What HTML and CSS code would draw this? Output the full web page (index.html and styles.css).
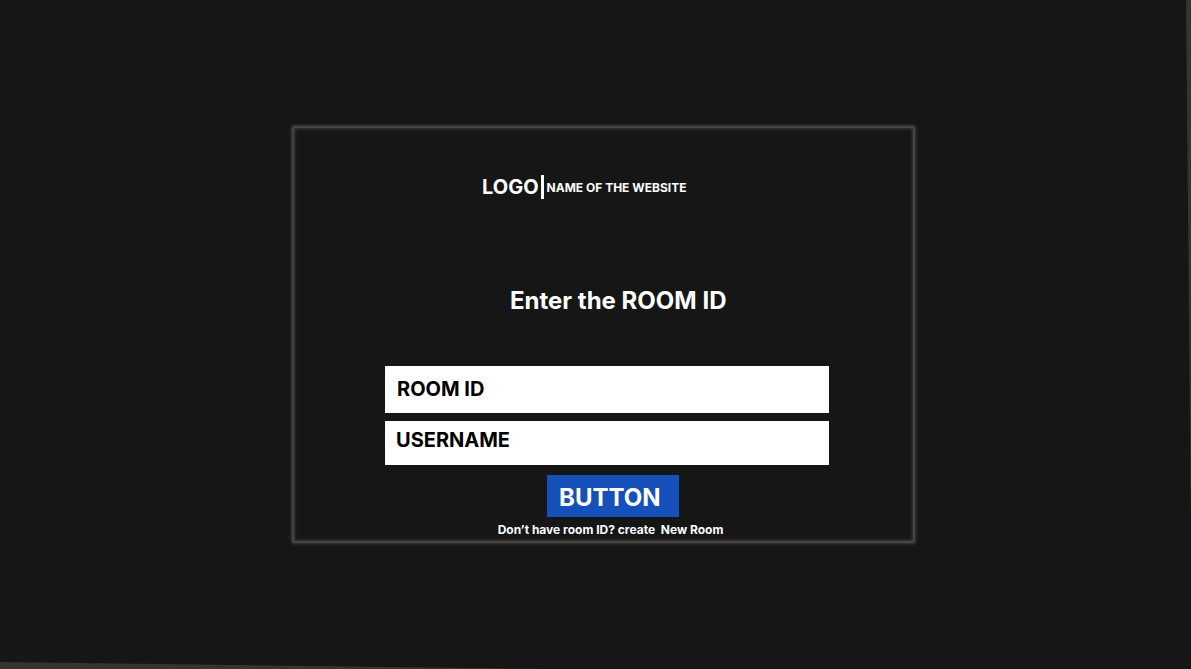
FILE: index.html
```html
<!DOCTYPE html>
<html lang="en">
<head>
<meta charset="utf-8">
<meta name="viewport" content="width=device-width, initial-scale=1">
<title>Enter the ROOM ID</title>
<link rel="stylesheet" href="styles.css">
</head>
<body>
<main class="stage">
  <section class="panel">
    <header class="brand">
      <span class="brand-logo">LOGO</span>
      <span class="brand-divider"></span>
      <span class="brand-name">NAME OF THE WEBSITE</span>
    </header>
    <h1 class="title">Enter the ROOM ID</h1>
    <form class="form">
      <input class="field field-room" type="text" placeholder="ROOM ID" aria-label="Room ID">
      <input class="field field-user" type="text" placeholder="USERNAME" aria-label="Username">
      <button class="submit" type="button">BUTTON</button>
    </form>
    <p class="hint">Don’t have room ID? create&nbsp; <a class="hint-link" href="#new-room">New Room</a></p>
  </section>
</main>
</body>
</html>
```

FILE: styles.css
```css
* {
  box-sizing: border-box;
}

body {
  margin: 0;
  background: #363432;
  color: #fff;
  font-family: Inter, "Liberation Sans", sans-serif;
  font-weight: 700;
}

.stage {
  min-height: 100vh;
  display: flex;
  align-items: center;
  justify-content: center;
  padding-left: 16px;
  background: #161616;
  clip-path: polygon(0 0, calc(100% - 5px) 0, 100% 80%, 100% 100%, 46% 100%, 0 calc(100% - 7px));
}

.panel {
  width: 100%;
  max-width: 623px;
  padding: 45px 84px 3px 91px;
  border: 2px solid #474443;
  border-radius: 2px;
  box-shadow: 0 0 3px 1px #3e3b3a, inset 0 0 3px 1px #3e3b3a;
}

.brand {
  display: flex;
  align-items: center;
  margin-left: 97px;
  line-height: 24px;
}

.brand-logo {
  font-size: 20px;
}

.brand-divider {
  width: 3px;
  height: 24px;
  margin: 0 3px 0 2px;
  background: #fff;
}

.brand-name {
  font-size: 12px;
  padding-top: 3px;
}

.title {
  margin: 86px 0 0 125px;
  font-size: 24px;
  font-weight: 700;
  line-height: 30px;
}

.form {
  display: flex;
  flex-direction: column;
  margin-top: 50px;
}

.field {
  width: 100%;
  border: 0;
  border-radius: 0;
  background: #fff;
  color: #000;
  font: inherit;
  font-size: 20px;
}

.field::placeholder {
  color: #000;
  opacity: 1;
}

.field-room {
  height: 47px;
  padding: 0 12px 2px;
}

.field-user {
  height: 44px;
  margin-top: 8px;
  padding: 0 11px 6px;
}

.submit {
  align-self: center;
  width: 132px;
  height: 42px;
  margin: 10px 0 0 12px;
  padding: 4px 12px 0;
  border: 0;
  background: #1650bb;
  color: #fff;
  font: inherit;
  font-size: 24px;
  line-height: 38px;
  text-align: left;
}

.hint {
  margin: 5px 0 0 7px;
  font-size: 12px;
  line-height: 16px;
  text-align: center;
}

.hint-link {
  color: inherit;
  text-decoration: none;
}
```
